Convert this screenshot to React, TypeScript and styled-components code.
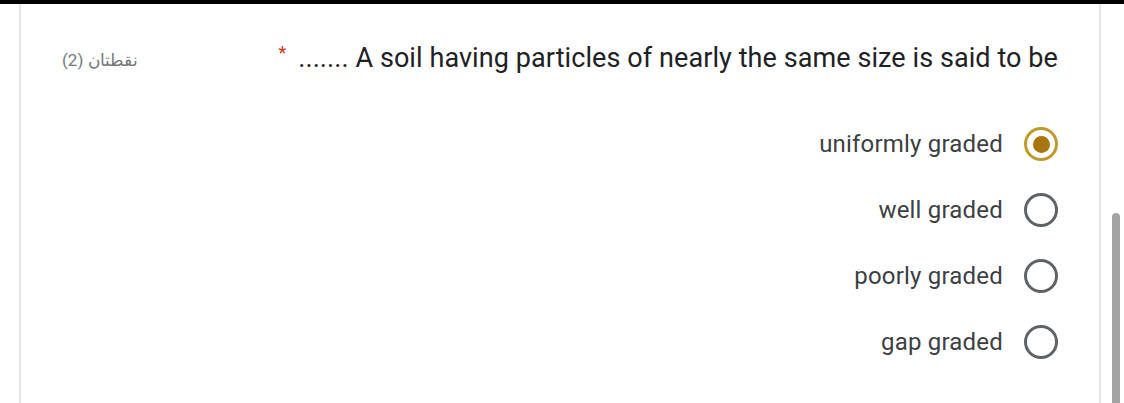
import React from "react";
import styled, { createGlobalStyle } from "styled-components";

const GlobalStyle = createGlobalStyle`
  html, body {
    margin: 0;
    padding: 0;
    background: #ffffff;
    height: 403px;
    overflow: hidden;
  }
  #root {
    height: 403px;
  }
`;

const options = [
  { label: "uniformly graded", checked: true },
  { label: "well graded", checked: false },
  { label: "poorly graded", checked: false },
  { label: "gap graded", checked: false },
];

function App() {
  return (
    <Page>
      <GlobalStyle />
      <TopBar />
      <Body>
        <Card>
          <Header>
            <Points dir="rtl">نقطتان (2)</Points>
            <Question>
              <Required>*</Required>
              <QuestionText>....... A soil having particles of nearly the same size is said to be</QuestionText>
            </Question>
          </Header>
          <OptionList>
            {options.map((o) => (
              <OptionRow key={o.label}>
                <OptionLabel>{o.label}</OptionLabel>
                <Radio $checked={o.checked}>{o.checked && <Dot />}</Radio>
              </OptionRow>
            ))}
          </OptionList>
        </Card>
        <Track>
          <Thumb />
        </Track>
      </Body>
    </Page>
  );
}

export default App;

const Page = styled.div`
  display: flex;
  flex-direction: column;
  height: 403px;
  width: 1124px;
`;

const TopBar = styled.div`
  height: 4px;
  background: #000000;
`;

const Body = styled.div`
  flex: 1;
  display: flex;
  padding-left: 19px;
`;

const Card = styled.div`
  border-left: 2px solid #e6e6e6;
  border-right: 2px solid #e6e6e6;
  padding: 0 41px;
  box-sizing: content-box;
  width: 996px;
`;

const Header = styled.div`
  display: flex;
  align-items: center;
  justify-content: space-between;
  padding-top: 34px;
  height: 40px;
`;

const Points = styled.div`
  font-family: "Roboto", "Noto Sans", sans-serif;
  font-size: 17px;
  color: #74787d;
  margin-top: 3px;
`;

const Question = styled.div`
  display: flex;
  align-items: flex-start;
  gap: 12px;
`;

const Required = styled.span`
  font-family: "Roboto", sans-serif;
  font-size: 18px;
  color: #d93025;
  line-height: 1;
  margin-top: 2px;
`;

const QuestionText = styled.span`
  font-family: "Roboto", sans-serif;
  font-size: 27px;
  color: #202124;
  line-height: 32px;
  letter-spacing: 0.08px;
`;

const OptionList = styled.div`
  display: flex;
  flex-direction: column;
  align-items: flex-end;
  padding-top: 33px;
`;

const OptionRow = styled.div`
  display: flex;
  align-items: center;
  gap: 21px;
  height: 66px;
`;

const OptionLabel = styled.span`
  font-family: "Roboto", sans-serif;
  font-size: 24px;
  color: #3c4043;
  letter-spacing: 0.2px;
`;

const Radio = styled.div<{ $checked: boolean }>`
  width: 28px;
  height: 28px;
  border-radius: 50%;
  border: 3px solid ${(p) => (p.$checked ? "#bf9a2a" : "#5f6368")};
  display: flex;
  align-items: center;
  justify-content: center;
`;

const Dot = styled.div`
  width: 17px;
  height: 17px;
  border-radius: 50%;
  background: #a87510;
`;

const Track = styled.div`
  flex: 1;
  display: flex;
  justify-content: center;
  padding-top: 209px;
  padding-left: 6px;
`;

const Thumb = styled.div`
  width: 8px;
  height: 100%;
  background: #a3a3a3;
  border-radius: 4px 4px 0 0;
`;
